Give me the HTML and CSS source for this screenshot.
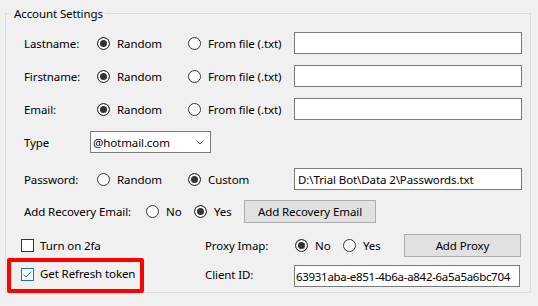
FILE: index.html
```html
<!DOCTYPE html>
<html lang="en">
<head>
  <meta charset="UTF-8" />
  <meta name="viewport" content="width=device-width, initial-scale=1.0"/>
  <title>Account Settings</title>
  <link rel="stylesheet" href="styles.css">
</head>
<body>

  <fieldset class="group">
    <legend class="group-title">Account Settings</legend>
    <div class="rows">

      <div class="row">
        <span class="label label--main">Lastname:</span>
        <label class="radio radio--first"><span class="radio-dot radio-dot--on"></span>Random</label>
        <label class="radio radio--second"><span class="radio-dot"></span>From file (.txt)</label>
        <span class="textbox textbox--wide"></span>
      </div>

      <div class="row">
        <span class="label label--main">Firstname:</span>
        <label class="radio radio--first"><span class="radio-dot radio-dot--on"></span>Random</label>
        <label class="radio radio--second"><span class="radio-dot"></span>From file (.txt)</label>
        <span class="textbox textbox--wide"></span>
      </div>

      <div class="row">
        <span class="label label--main">Email:</span>
        <label class="radio radio--first"><span class="radio-dot radio-dot--on"></span>Random</label>
        <label class="radio radio--second"><span class="radio-dot"></span>From file (.txt)</label>
        <span class="textbox textbox--wide"></span>
      </div>

      <div class="row">
        <span class="label label--type">Type</span>
        <div class="combo">
          <span class="combo-text">@hotmail.com</span>
          <svg class="combo-arrow" width="8" height="5" viewBox="0 0 8 5">
            <polyline points="0.5,0.5 4,4 7.5,0.5" fill="none" stroke="#606060" stroke-width="1"/>
          </svg>
        </div>
      </div>

      <div class="row row--password">
        <span class="label label--main">Password:</span>
        <label class="radio radio--first"><span class="radio-dot"></span>Random</label>
        <label class="radio radio--second"><span class="radio-dot radio-dot--on"></span>Custom</label>
        <span class="textbox textbox--wide">D:\Trial Bot\Data 2\Passwords.txt</span>
      </div>

      <div class="row row--recovery">
        <span class="label label--recovery">Add Recovery Email:</span>
        <label class="radio radio--no"><span class="radio-dot"></span>No</label>
        <label class="radio radio--yes"><span class="radio-dot radio-dot--on"></span>Yes</label>
        <button class="btn btn--recovery">Add Recovery Email</button>
      </div>

      <div class="row row--proxy">
        <label class="check"><span class="check-box"></span>Turn on 2fa</label>
        <span class="label label--side">Proxy Imap:</span>
        <label class="radio radio--no"><span class="radio-dot radio-dot--on"></span>No</label>
        <label class="radio radio--proxy-yes"><span class="radio-dot"></span>Yes</label>
        <button class="btn btn--proxy">Add Proxy</button>
      </div>

      <div class="row row--client">
        <label class="check check--marked">
          <span class="check-box check-box--on">
            <svg width="11" height="11" viewBox="0 0 11 11">
              <polyline points="1.5,5.5 4,8 9.5,2.5" fill="none" stroke="#1f6fc5" stroke-width="1"/>
            </svg>
          </span>Get Refresh token
        </label>
        <span class="label label--side label--client">Client ID:</span>
        <span class="textbox textbox--client">63931aba-e851-4b6a-a842-6a5a5a6bc704</span>
      </div>

    </div>
  </fieldset>

</body>
</html>
```

FILE: styles.css
```css
body {
  margin: 0;
  background: #f0f0f0;
  font-family: "Noto Sans", "Segoe UI", sans-serif;
  font-size: 11.5px;
  letter-spacing: -0.1px;
  color: #000;
  height: 306px;
  overflow: hidden;
}

.group {
  box-sizing: border-box;
  width: 526px;
  margin: 6px 0 0 5px;
  padding: 11px 0 5px 18px;
  border: 1px solid #dcdcdc;
  min-inline-size: 0;
}

.group-title {
  margin-left: -12px;
  padding: 0 2px;
  line-height: 15px;
}

.rows {
  display: flex;
  flex-direction: column;
  gap: 11px;
}

.row {
  display: flex;
  align-items: center;
  height: 22px;
}

.row--password {
  margin-top: 4px;
}

.row--recovery {
  height: 23px;
  margin-top: -1px;
}

.row--proxy {
  height: 23px;
}

.row--client {
  margin-top: -3px;
}

.label {
  flex: none;
  white-space: nowrap;
}

.label--main {
  width: 73px;
}

.label--type {
  width: 66px;
}

.label--recovery {
  width: 122px;
}

.label--side {
  width: 90px;
}

.label--client {
  width: 89px;
}

.row--client .label,
.row--client .check {
  margin-bottom: 4px;
}

/* radio buttons */
.radio {
  flex: none;
  display: flex;
  align-items: center;
  white-space: nowrap;
}

.radio--first {
  width: 91px;
}

.radio--second {
  width: 106px;
}

.radio--no {
  width: 48px;
}

.radio--yes {
  width: 50px;
}

.radio--proxy-yes {
  width: 61px;
}

.radio-dot {
  box-sizing: border-box;
  width: 13px;
  height: 13px;
  margin-right: 7px;
  border: 1px solid #333;
  border-radius: 50%;
  background: #fff;
}

.radio-dot--on {
  background: #333;
  box-shadow: inset 0 0 0 2px #fff;
}

/* check boxes */
.check {
  flex: none;
  width: 184px;
  height: 16px;
  line-height: 16px;
  margin-left: -3px;
  display: flex;
  align-items: center;
  white-space: nowrap;
}

.check-box {
  box-sizing: border-box;
  width: 13px;
  height: 13px;
  margin-right: 6px;
  border: 1px solid #333;
  background: #fff;
  display: flex;
}

.check-box--on {
  border-color: #1f6fc5;
}

.check--marked {
  position: relative;
}

.check--marked::after {
  content: "";
  position: absolute;
  left: -14px;
  top: -8px;
  box-sizing: border-box;
  width: 137px;
  height: 35px;
  border: 4px solid #f00;
  border-radius: 2px;
}

/* inputs */
.textbox {
  box-sizing: border-box;
  flex: none;
  height: 22px;
  padding: 0 3px;
  border: 1px solid #7a7a7a;
  background: #fff;
  display: flex;
  align-items: center;
  white-space: nowrap;
  overflow: hidden;
}

.textbox--wide {
  width: 228px;
}

.textbox--client {
  width: 226px;
  padding: 0 1px;
  letter-spacing: -0.3px;
}

.combo {
  box-sizing: border-box;
  width: 121px;
  height: 22px;
  padding: 0 6px 0 2px;
  border: 1px solid #7a7a7a;
  background: #fff;
  display: flex;
  align-items: center;
  justify-content: space-between;
}

.btn {
  box-sizing: border-box;
  flex: none;
  height: 23px;
  padding: 0;
  border: 1px solid #adadad;
  background: #e1e1e1;
  font-family: inherit;
  font-size: 11.5px;
  letter-spacing: -0.1px;
  color: #000;
}

.btn--recovery {
  width: 132px;
}

.btn--proxy {
  width: 117px;
}
```
